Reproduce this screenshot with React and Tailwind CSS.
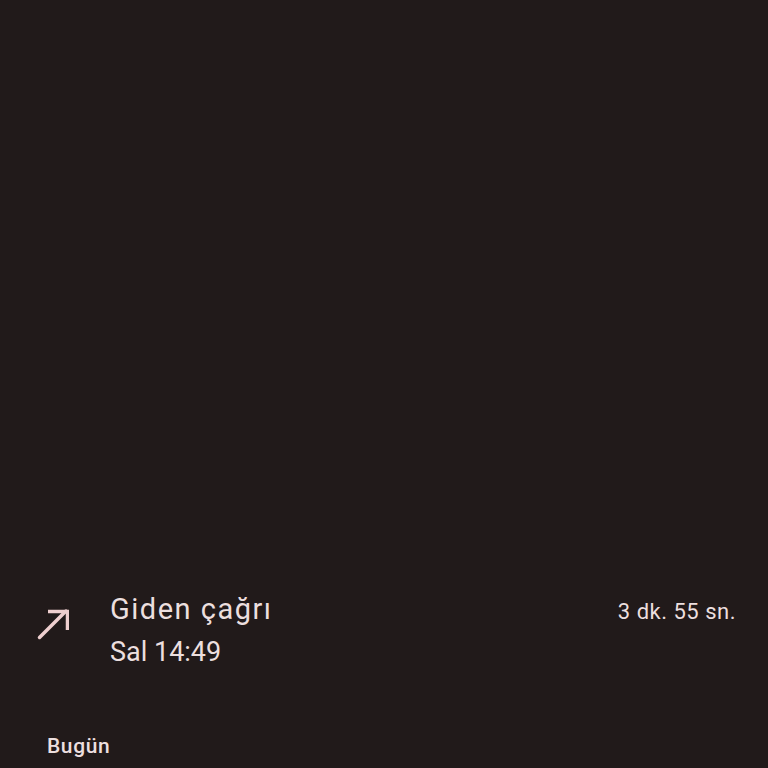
export default function App() {
  return (
    <div
      className="h-[768px] w-[768px] bg-[#211a1a] flex flex-col overflow-hidden"
      style={{ fontFamily: 'Roboto, "Noto Sans", sans-serif' }}
    >
      <div className="flex-1" />
      <div className="flex items-start pl-[37px] pr-[32px]">
        <div className="w-[73px] pt-[17px]">
          <svg width="32" height="32" viewBox="0 0 32 32" fill="none" stroke="#eecfcf" strokeWidth="3.5">
            <path d="M2.5 29.5 L29 3" strokeLinecap="round" />
            <path d="M11 3.5 H30.5 V22" />
          </svg>
        </div>
        <div className="flex-1 flex flex-col">
          <span className="text-[29px] leading-[36px] tracking-[1.5px] text-[#ecdfdf]">Giden çağrı</span>
          <span className="text-[27px] leading-[36px] mt-[7px] text-[#ecdfdf]">Sal 14:49</span>
        </div>
        <span className="text-[22px] leading-[36px] pt-[3px] tracking-[0.5px] text-[#ecdfdf]">3 dk. 55 sn.</span>
      </div>
      <div className="h-[58px]" />
      <div className="pl-[47px] pt-[4px] h-[40px]">
        <span className="text-[21px] leading-[28px] tracking-[0.6px] font-medium text-[#ecdfdf]">Bugün</span>
      </div>
    </div>
  )
}
